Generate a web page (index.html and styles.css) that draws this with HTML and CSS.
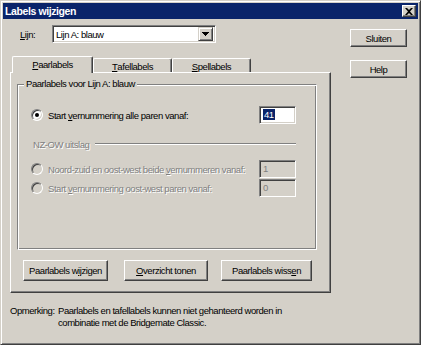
FILE: index.html
```html
<!doctype html>
<html lang="nl">
<head>
  <meta charset="UTF-8">
  <title>Labels wijzigen</title>
  <link rel="stylesheet" href="styles.css">
</head>
<body>
<div class="dialog">
  <div class="titlebar">
    <span class="title">Labels wijzigen</span>
    <span class="close">
      <svg width="8" height="7" viewBox="0 0 8 7"><path d="M0 0h2l2 2 2-2h2l-3 3.5 3 3.5h-2l-2-2-2 2h-2l3-3.5z" fill="#000"/></svg>
    </span>
  </div>
  <div class="client">
    <div class="main">
      <div class="line-row">
        <span class="lbl"><u>L</u>ijn:</span>
        <div class="combo">
          <span class="combo-text">Lijn A: blauw</span>
          <span class="drop">
            <svg width="7" height="4" viewBox="0 0 7 4"><path d="M0 0h7v1h-1v1h-1v1h-1v1h-1v-1h-1v-1h-1v-1h-1z" fill="#000"/></svg>
          </span>
        </div>
      </div>
      <div class="tabs">
        <div class="tab active"><u>P</u>aarlabels</div>
        <div class="tab"><u>T</u>afellabels</div>
        <div class="tab wide"><u>S</u>pellabels</div>
      </div>
      <div class="panel">
        <div class="group">
          <span class="legend">Paarlabels voor Lijn A: blauw</span>
          <div class="opt">
            <span class="radio on"></span>
            <span>Start <u>v</u>ernummering alle paren vanaf:</span>
            <span class="edit"><span class="sel">41</span></span>
          </div>
          <div class="sub">
            <span class="dis">NZ-OW uitslag</span>
            <span class="rule"></span>
          </div>
          <div class="opt row2">
            <span class="radio off"></span>
            <span class="dis">Noord-zuid en oost-west beide <u>v</u>ernummeren vanaf:</span>
            <span class="edit off">1</span>
          </div>
          <div class="opt row3">
            <span class="radio off"></span>
            <span class="dis">Start <u>v</u>ernummering oost-west paren vanaf:</span>
            <span class="edit off">0</span>
          </div>
        </div>
        <div class="actions">
          <button class="btn b1">Paarlabels w<u>ij</u>zigen</button>
          <button class="btn b2"><u>O</u>verzicht tonen</button>
          <button class="btn b3">Paarlabels wiss<u>e</u>n</button>
        </div>
      </div>
      <div class="note">
        <span class="note-key">Opmerking:</span>
        <span>Paarlabels en tafellabels kunnen niet gehanteerd worden in<br>combinatie met de Bridgemate Classic.</span>
      </div>
    </div>
    <div class="side">
      <button class="btn side-btn">Sluiten</button>
      <button class="btn side-btn help">Help</button>
    </div>
  </div>
</div>
</body>
</html>
```

FILE: styles.css
```css
html, body { margin: 0; padding: 0; background: #d4d0c8; }
* { box-sizing: border-box; font-family: "Liberation Sans", Arial, sans-serif; font-size: 9.5px; letter-spacing: -0.45px; white-space: nowrap; }
u { text-decoration: underline; text-underline-offset: 1px; }

.dialog { width: 421px; height: 345px; background: #d4d0c8; color: #000; padding: 2px; border: 1px solid; border-color: #d4d0c8 #404040 #404040 #d4d0c8; box-shadow: inset 1px 1px #fff, inset -1px -1px #808080; }

.titlebar { height: 16px; background: #0a246a; display: flex; align-items: center; justify-content: space-between; padding: 0 2px 0 2px; }
.title { color: #fff; font-weight: bold; font-size: 10.5px; letter-spacing: -0.4px; }
.close { width: 14px; height: 12px; background: #d4d0c8; display: flex; align-items: center; justify-content: center; border: 1px solid; border-color: #fff #404040 #404040 #fff; box-shadow: inset -1px -1px #808080; }

.client { display: flex; padding-left: 7px; gap: 19px; }
.main { width: 321px; }
.side { width: 57px; padding-top: 10px; display: flex; flex-direction: column; gap: 13px; }

.line-row { margin-top: 6px; height: 18px; display: flex; align-items: center; padding-left: 10px; }
.lbl { width: 32px; }
.combo { width: 164px; height: 18px; background: #fff; display: flex; align-items: center; justify-content: space-between; border: 1px solid; border-color: #808080 #fff #fff #808080; box-shadow: inset 1px 1px #404040, inset -1px -1px #d4d0c8; padding: 2px; }
.combo-text { padding-left: 1px; }
.drop { width: 15px; height: 14px; background: #d4d0c8; display: flex; align-items: center; justify-content: center; border: 1px solid; border-color: #d4d0c8 #404040 #404040 #d4d0c8; box-shadow: inset 1px 1px #fff, inset -1px -1px #808080; }

.tabs { margin-top: 13px; height: 16px; display: flex; align-items: flex-end; padding-left: 2px; position: relative; z-index: 1; }
.tab { width: 79px; height: 14px; display: flex; align-items: center; justify-content: center; border: 1px solid; border-bottom: 0; border-color: #fff #404040 #404040 #fff; border-radius: 2px 2px 0 0; box-shadow: inset -1px 0 #808080; background: #d4d0c8; padding-top: 1px; }
.tab.active { width: 81px; height: 17px; margin-bottom: -1px; padding-top: 0; padding-bottom: 2px; }

.panel { width: 321px; height: 221px; border: 1px solid; border-color: #fff #404040 #404040 #fff; box-shadow: inset -1px -1px #808080; padding: 11px 0 0 6px; }

.group { position: relative; width: 300px; height: 166px; border: 1px solid; border-color: #808080 #fff #fff #808080; box-shadow: inset 1px 1px #fff, inset -1px -1px #808080; padding: 21px 20px 0 13px; }
.legend { position: absolute; top: -7px; left: 6px; padding: 0 2px; background: #d4d0c8; }

.opt { height: 18px; display: flex; align-items: center; }
.opt .edit { margin-left: auto; }
.row2 { margin-top: 10px; }
.row3 { margin-top: 1px; }
.radio { width: 12px; height: 12px; margin-right: 5px; border-radius: 50%; border: 1px solid; border-color: #808080 #fff #fff #808080; box-shadow: inset 1px 1px #404040, inset -1px -1px #d4d0c8; background: #fff; display: flex; align-items: center; justify-content: center; }
.radio.on::after { content: ""; width: 4px; height: 4px; border-radius: 50%; background: #000; }
.radio.off { background: #d4d0c8; }
.dis { color: #808080; text-shadow: 1px 1px #fff; }

.edit { width: 37px; height: 18px; background: #fff; border: 1px solid; border-color: #808080 #fff #fff #808080; box-shadow: inset 1px 1px #404040, inset -1px -1px #d4d0c8; padding: 2px 3px; line-height: 12px; }
.edit.off { background: #d4d0c8; color: #808080; }
.sel { background: #0a246a; color: #fff; padding: 0 1px; }

.sub { margin-top: 14px; height: 12px; display: flex; align-items: center; padding-left: 2px; }
.rule { flex: 1; margin-left: 6px; height: 2px; border-top: 1px solid #808080; border-bottom: 1px solid #fff; }

.btn { background: #d4d0c8; color: #000; border: 1px solid; border-color: #fff #404040 #404040 #fff; box-shadow: inset -1px -1px #808080; padding: 0; border-radius: 0; }
.side-btn { height: 18px; width: 57px; }
.actions { margin-top: 10px; margin-left: 6px; display: flex; }
.actions .btn { height: 21px; }
.b1 { width: 85px; }
.b2 { width: 84px; margin-left: 16px; }
.b3 { width: 91px; margin-left: 13px; }

.note { margin-top: 12px; display: flex; line-height: 12px; }
.note-key { width: 48px; flex-shrink: 0; }
```
